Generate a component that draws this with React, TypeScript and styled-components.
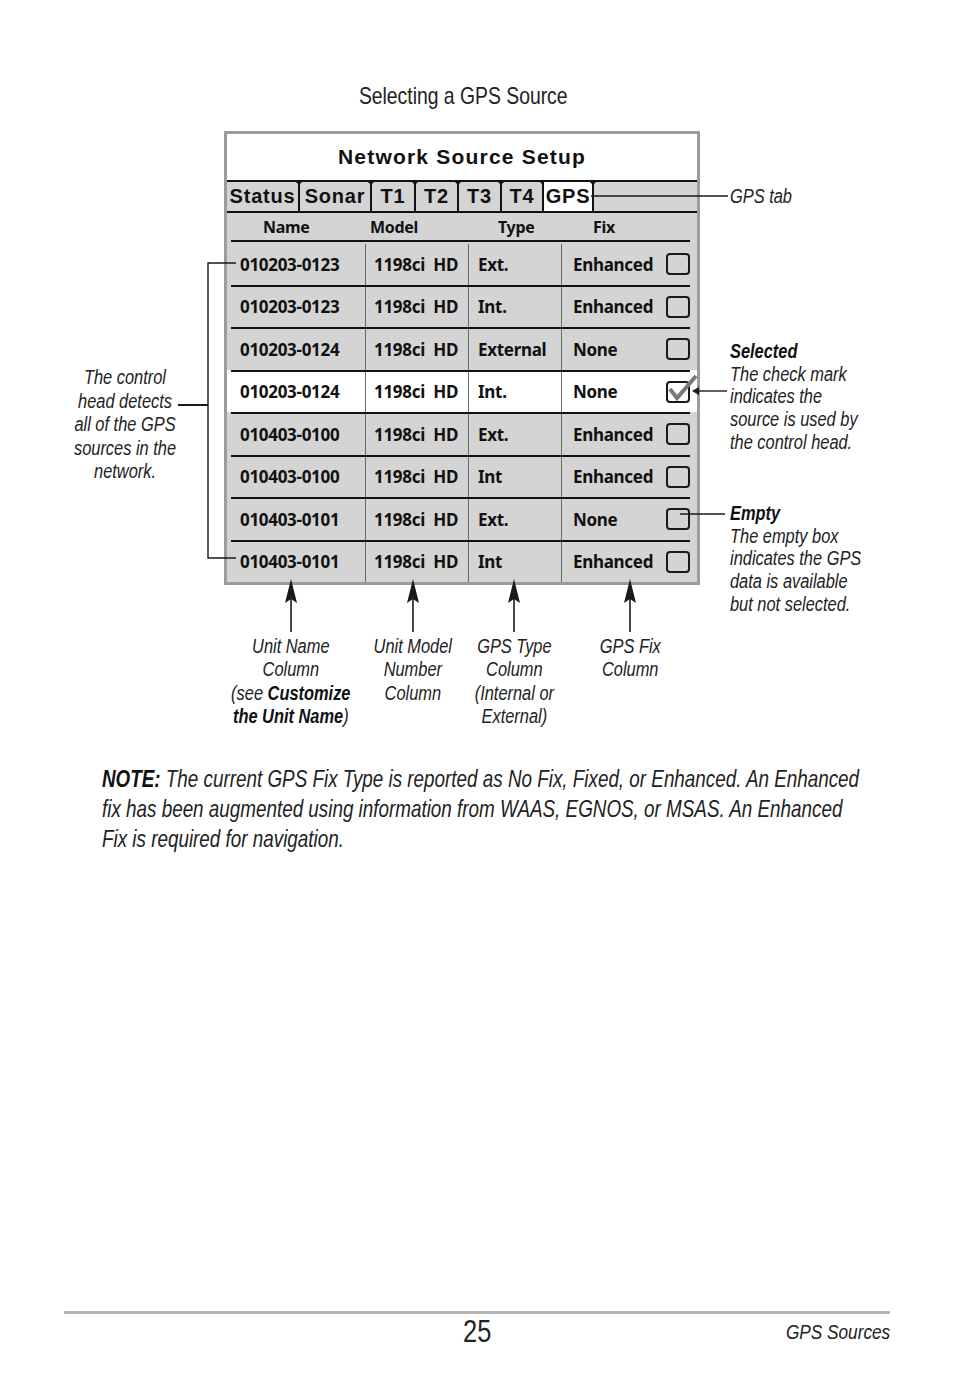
import React, { FC } from "react";
import styled, { createGlobalStyle, css } from "styled-components";

const SCREEN = `"Liberation Sans", Arial, sans-serif`;
const TABLE = `"Noto Sans", "DejaVu Sans", sans-serif`;

// condensed print type: Arial metrics squeezed like Arial Narrow
const narrow = css`
    font-family: "Liberation Sans", Arial, sans-serif;
    transform: scaleX(0.82);
    white-space: nowrap;
`

//styles
const GlobalStyle = createGlobalStyle`
    html, body {
        margin: 0;
        padding: 0;
        background: #ffffff;
    }
    body {
        font-family: "Liberation Sans", Arial, sans-serif;
        color: #1a1a1a;
    }
`
const Page = styled.div`
    width: 954px;
    min-height: 1378px;
    display: flex;
    flex-direction: column;
    padding-top: 83px;
    box-sizing: border-box;
`
const Caption = styled.div`
    ${narrow};
    align-self: center;
    margin-right: 28px;
    transform-origin: center;
    font-size: 23.6px;
    line-height: 26px;
    color: #222;
`
const Figure = styled.div`
    position: relative;
    margin-top: 22px;
    display: grid;
    grid-template-columns: 224px 476px 1fr;
    grid-template-rows: 454px auto;
`
const LeftNote = styled.div`
    padding: 235px 0 0 26px;
`
const LeftText = styled.div`
    ${narrow};
    transform-origin: center top;
    text-align: center;
    font-style: italic;
    font-size: 20px;
    line-height: 23.5px;
    color: #222;
`
const RightNotes = styled.div`
    ${narrow};
    transform-origin: 30px 0;
    padding: 54px 0 0 30px;
    display: flex;
    flex-direction: column;
    font-style: italic;
    font-size: 20px;
    line-height: 22.8px;
    color: #222;
`
const Note = styled.div<{ $gap: number }>`
    margin-top: ${(p) => p.$gap}px;
`
const NoteTitle = styled.div`
    font-weight: 700;
    color: #111;
`
const Screen = styled.div`
    width: 476px;
    height: 454px;
    box-sizing: border-box;
    border: 3px solid #9c9c9c;
    background: #d4d4d4;
    display: flex;
    flex-direction: column;
`
const ScreenTitle = styled.div`
    height: 46px;
    background: #ffffff;
    display: flex;
    align-items: center;
    justify-content: center;
    font-family: ${SCREEN};
    font-weight: 700;
    font-size: 21px;
    letter-spacing: 1.2px;
    color: #111;
`
const TabBar = styled.div`
    height: 29px;
    border-top: 2px solid #111;
    border-bottom: 2px solid #111;
    display: flex;
`
const Tab = styled.div<{ $w: number; $active?: boolean }>`
    position: relative;
    width: ${(p) => p.$w}px;
    border-right: 2px solid #111;
    background: ${(p) => (p.$active ? "#ffffff" : "transparent")};
    display: flex;
    align-items: center;
    justify-content: center;
    font-family: ${SCREEN};
    font-weight: 700;
    font-size: 20px;
    letter-spacing: 0.8px;
    color: #111;
    &::after {
        content: "";
        position: absolute;
        top: 0;
        right: -4px;
        border-left: 3px solid transparent;
        border-right: 3px solid transparent;
        border-top: 3px solid #111;
    }
`
const Columns = styled.div`
    display: grid;
    grid-template-columns: 134px 103px 93px 129px;
    margin: 0 7px 0 4px;
`
const HeaderRow = styled(Columns)`
    height: 27px;
    border-bottom: 2px solid #111;
    align-items: center;
`
const HeadCell = styled.div<{ $pad: number }>`
    padding-left: ${(p) => p.$pad}px;
    font-family: ${TABLE};
    font-weight: 700;
    font-size: 16px;
    letter-spacing: -0.3px;
    color: #111;
`
const Row = styled.div<{ $selected?: boolean }>`
    background: ${(p) => (p.$selected ? "#ffffff" : "transparent")};
`
const RowInner = styled(Columns)<{ $first?: boolean }>`
    height: 40.5px;
    border-top: ${(p) => (p.$first ? "0" : "2px solid #111")};
    padding-top: ${(p) => (p.$first ? "2px" : "0")};
`
const Cell = styled.div<{ $pad: number; $divider?: boolean }>`
    display: flex;
    align-items: center;
    padding-left: ${(p) => p.$pad}px;
    border-left: ${(p) => (p.$divider ? "1px solid #6a6a6a" : "0")};
    font-family: ${TABLE};
    font-weight: 700;
    font-size: 17px;
    letter-spacing: -0.3px;
    color: #111;
    white-space: pre;
`
const FixCell = styled(Cell)`
    justify-content: space-between;
`
const Box = styled.div`
    position: relative;
    width: 20px;
    height: 18px;
    border: 2px solid #1a1a1a;
    border-radius: 4px;
    flex-shrink: 0;
`
const Check = styled.svg`
    position: absolute;
    left: 0;
    top: -9px;
`
const Labels = styled.div`
    grid-column: 2;
    display: grid;
    grid-template-columns: 134px 110px 92px 140px;
`
const Label = styled.div`
    display: flex;
    flex-direction: column;
    align-items: center;
`
const LabelText = styled.div`
    ${narrow};
    width: max-content;
    transform-origin: center top;
    text-align: center;
    font-style: italic;
    font-size: 20px;
    line-height: 23.4px;
    color: #222;
    b {
        font-weight: 700;
        color: #111;
    }
`
const Arrow = styled.svg`
    margin-top: -6px;
    margin-bottom: 3px;
`
const Overlay = styled.svg`
    position: absolute;
    left: 0;
    top: 0;
    pointer-events: none;
`
const NoteText = styled.p`
    ${narrow};
    transform: scaleX(0.785);
    transform-origin: left top;
    margin: 35px 0 0 102px;
    font-style: italic;
    font-size: 24px;
    line-height: 30px;
    color: #222;
    b {
        font-weight: 700;
        color: #111;
    }
`
const Footer = styled.div`
    margin: auto 64px 0 64px;
    padding-bottom: 28px;
`
const FooterRule = styled.div`
    height: 3px;
    background: #b5b5b5;
`
const FooterRow = styled.div`
    display: grid;
    grid-template-columns: 1fr auto 1fr;
    align-items: center;
    height: 36px;
`
const PageNumber = styled.div`
    ${narrow};
    grid-column: 2;
    transform-origin: center;
    font-size: 31px;
    color: #222;
`
const Section = styled.div`
    ${narrow};
    justify-self: end;
    transform-origin: right center;
    font-style: italic;
    font-size: 21px;
    color: #222;
`

interface Source {
    name: string;
    model: string;
    type: string;
    fix: string;
    selected?: boolean;
}

const sources: Source[] = [
    { name: "010203-0123", model: "1198ci  HD", type: "Ext.", fix: "Enhanced" },
    { name: "010203-0123", model: "1198ci  HD", type: "Int.", fix: "Enhanced" },
    { name: "010203-0124", model: "1198ci  HD", type: "External", fix: "None" },
    { name: "010203-0124", model: "1198ci  HD", type: "Int.", fix: "None", selected: true },
    { name: "010403-0100", model: "1198ci  HD", type: "Ext.", fix: "Enhanced" },
    { name: "010403-0100", model: "1198ci  HD", type: "Int", fix: "Enhanced" },
    { name: "010403-0101", model: "1198ci  HD", type: "Ext.", fix: "None" },
    { name: "010403-0101", model: "1198ci  HD", type: "Int", fix: "Enhanced" },
];

const tabs = [
    { label: "Status", w: 71 },
    { label: "Sonar", w: 70 },
    { label: "T1", w: 42 },
    { label: "T2", w: 41 },
    { label: "T3", w: 41 },
    { label: "T4", w: 40 },
    { label: "GPS", w: 48, active: true },
];

const UpArrow: FC = () => (
    <Arrow width="14" height="53" viewBox="0 0 14 53">
        <polygon points="7,0 13,24 7,20 1,24" fill="#1a1a1a" />
        <line x1="7" y1="18" x2="7" y2="53" stroke="#1a1a1a" strokeWidth="1.6" />
    </Arrow>
);

const CheckBox: FC<{ checked?: boolean }> = ({ checked }) => (
    <Box>
        {checked && (
            <Check width="30" height="29" viewBox="0 0 30 29">
                <path d="M2 15 L9 24 L28 2" fill="none" stroke="#7a7a7a" strokeWidth="4" strokeLinejoin="miter" />
            </Check>
        )}
    </Box>
);

const App: FC = () => {
    return (
        <Page>
            <GlobalStyle />
            <Caption>Selecting a GPS Source</Caption>
            <Figure>
                <LeftNote>
                    <LeftText>
                        The control<br />
                        head detects<br />
                        all of the GPS<br />
                        sources in the<br />
                        network.
                    </LeftText>
                </LeftNote>
                <Screen>
                    <ScreenTitle>Network Source Setup</ScreenTitle>
                    <TabBar>
                        {tabs.map((t) => (
                            <Tab key={t.label} $w={t.w} $active={t.active}>{t.label}</Tab>
                        ))}
                    </TabBar>
                    <HeaderRow>
                        <HeadCell $pad={32}>Name</HeadCell>
                        <HeadCell $pad={5}>Model</HeadCell>
                        <HeadCell $pad={30}>Type</HeadCell>
                        <HeadCell $pad={32}>Fix</HeadCell>
                    </HeaderRow>
                    {sources.map((s, i) => (
                        <Row key={i} $selected={s.selected}>
                            <RowInner $first={i === 0}>
                                <Cell $pad={9}>{s.name}</Cell>
                                <Cell $pad={8} $divider>{s.model}</Cell>
                                <Cell $pad={9} $divider>{s.type}</Cell>
                                <FixCell $pad={11} $divider>
                                    {s.fix}
                                    <CheckBox checked={s.selected} />
                                </FixCell>
                            </RowInner>
                        </Row>
                    ))}
                </Screen>
                <RightNotes>
                    <Note $gap={0}>GPS tab</Note>
                    <Note $gap={132}>
                        <NoteTitle>Selected</NoteTitle>
                        The check mark<br />
                        indicates the<br />
                        source is used by<br />
                        the control head.
                    </Note>
                    <Note $gap={48}>
                        <NoteTitle>Empty</NoteTitle>
                        The empty box<br />
                        indicates the GPS<br />
                        data is available<br />
                        but not selected.
                    </Note>
                </RightNotes>
                <Labels>
                    <Label>
                        <UpArrow />
                        <LabelText>
                            Unit Name<br />
                            Column<br />
                            (see <b>Customize</b><br />
                            <b>the Unit Name</b>)
                        </LabelText>
                    </Label>
                    <Label>
                        <UpArrow />
                        <LabelText>
                            Unit Model<br />
                            Number<br />
                            Column
                        </LabelText>
                    </Label>
                    <Label>
                        <UpArrow />
                        <LabelText>
                            GPS Type<br />
                            Column<br />
                            (Internal or<br />
                            External)
                        </LabelText>
                    </Label>
                    <Label>
                        <UpArrow />
                        <LabelText>
                            GPS Fix<br />
                            Column
                        </LabelText>
                    </Label>
                </Labels>
                <Overlay width="954" height="460" viewBox="0 0 954 460">
                    <line x1="591" y1="65" x2="728" y2="65" stroke="#1a1a1a" strokeWidth="1.4" />
                    <line x1="697" y1="260" x2="727" y2="260" stroke="#1a1a1a" strokeWidth="1.4" />
                    <polygon points="692,260 699,256 699,264" fill="#1a1a1a" />
                    <line x1="680" y1="383" x2="725" y2="383" stroke="#1a1a1a" strokeWidth="1.4" />
                    <polyline points="236,132 208,132 208,427 236,427" fill="none" stroke="#1a1a1a" strokeWidth="1.4" />
                    <line x1="178" y1="274" x2="208" y2="274" stroke="#1a1a1a" strokeWidth="2" />
                </Overlay>
            </Figure>
            <NoteText>
                <b>NOTE:</b> The current GPS Fix Type is reported as No Fix, Fixed, or Enhanced. An Enhanced<br />
                fix has been augmented using information from WAAS, EGNOS, or MSAS. An Enhanced<br />
                Fix is required for navigation.
            </NoteText>
            <Footer>
                <FooterRule />
                <FooterRow>
                    <PageNumber>25</PageNumber>
                    <Section>GPS Sources</Section>
                </FooterRow>
            </Footer>
        </Page>
    );
}

export default App;
